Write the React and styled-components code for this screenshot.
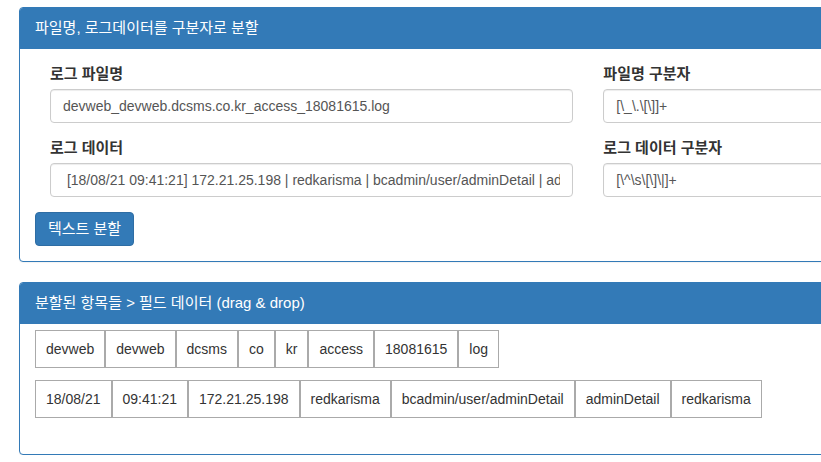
import styled, { createGlobalStyle } from "styled-components";

const GlobalStyle = createGlobalStyle`
  html, body {
    margin: 0;
    padding: 0;
    overflow: hidden;
    background: #fff;
  }
  body {
    font-family: "Liberation Sans", "Noto Sans CJK KR", sans-serif;
    font-size: 14px;
    line-height: 20px;
    color: #333;
  }
  * {
    box-sizing: border-box;
  }
`

const PageStyled = styled.div`
  padding: 7px 0 0 19px;
  display: flex;
  flex-direction: column;
  gap: 20px;
`
const PanelStyled = styled.div`
  width: 862px;
  border: 1px solid #337ab7;
  border-radius: 4px;
  background: #fff;
  box-shadow: 0 1px 1px rgba(0, 0, 0, 0.05);
`
const HeadingStyled = styled.div`
  background: #337ab7;
  color: #fff;
  padding: 10px 15px;
  border-bottom: 1px solid #337ab7;
  border-radius: 3px 3px 0 0;
  font-size: 15px;
  line-height: 20px;
`
const BodyStyled = styled.div`
  padding: ${(p) => p.$pad || "15px"};
`
const FormRowStyled = styled.div`
  display: grid;
  grid-template-columns: 2fr 1fr;
`
const ColStyled = styled.div`
  padding: 0 15px;
  display: flex;
  flex-direction: column;
`
const GroupStyled = styled.div`
  margin-bottom: 15px;
`
const LabelStyled = styled.label`
  display: block;
  font-size: 15px;
  font-weight: 700;
  margin-bottom: 5px;
  line-height: 20px;
`
const InputStyled = styled.input`
  display: block;
  width: 100%;
  height: 34px;
  padding: 6px 12px;
  font-family: inherit;
  font-size: 14px;
  line-height: 20px;
  color: #555;
  background: #fff;
  border: 1px solid #ccc;
  border-radius: 4px;
  box-shadow: inset 0 1px 1px rgba(0, 0, 0, 0.075);
  outline: none;
`
const ButtonStyled = styled.button`
  display: inline-block;
  padding: 6px 12px;
  font-family: inherit;
  font-size: 15px;
  line-height: 20px;
  color: #fff;
  background: #337ab7;
  border: 1px solid #2e6da4;
  border-radius: 4px;
  cursor: pointer;
`
const TileRowStyled = styled.div`
  display: flex;
  flex-wrap: wrap;
  margin-bottom: 12px;
  &:last-child {
    margin-bottom: 0;
  }
`
const TileStyled = styled.div`
  border: 1px solid #aaa;
  padding: 8px 10px;
  font-size: 14px;
  line-height: 20px;
  color: #333;
  background: #fff;
  cursor: move;
`

const fileTokens = ["devweb", "devweb", "dcsms", "co", "kr", "access", "18081615", "log"];
const dataTokens = ["18/08/21", "09:41:21", "172.21.25.198", "redkarisma", "bcadmin/user/adminDetail", "adminDetail", "redkarisma"];

const Field = ({ label, value }) => (
    <GroupStyled>
        <LabelStyled>{label}</LabelStyled>
        <InputStyled type="text" defaultValue={value} readOnly />
    </GroupStyled>
)

export default function App() {
    return (
        <>
            <GlobalStyle />
            <PageStyled>
                <PanelStyled>
                    <HeadingStyled>파일명, 로그데이터를 구분자로 분할</HeadingStyled>
                    <BodyStyled>
                        <FormRowStyled>
                            <ColStyled>
                                <Field label="로그 파일명" value="devweb_devweb.dcsms.co.kr_access_18081615.log" />
                                <Field label="로그 데이터" value=" [18/08/21 09:41:21] 172.21.25.198 | redkarisma | bcadmin/user/adminDetail | adminDetail | redkarisma" />
                            </ColStyled>
                            <ColStyled>
                                <Field label="파일명 구분자" value="[\_\.\[\]]+" />
                                <Field label="로그 데이터 구분자" value="[\^\s\[\]\|]+" />
                            </ColStyled>
                        </FormRowStyled>
                        <ButtonStyled type="button">텍스트 분할</ButtonStyled>
                    </BodyStyled>
                </PanelStyled>
                <PanelStyled>
                    <HeadingStyled>분할된 항목들 &gt; 필드 데이터 (drag &amp; drop)</HeadingStyled>
                    <BodyStyled $pad="6px 15px 36px">
                        <TileRowStyled>
                            {fileTokens.map((t, i) => <TileStyled key={i}>{t}</TileStyled>)}
                        </TileRowStyled>
                        <TileRowStyled>
                            {dataTokens.map((t, i) => <TileStyled key={i}>{t}</TileStyled>)}
                        </TileRowStyled>
                    </BodyStyled>
                </PanelStyled>
            </PageStyled>
        </>
    )
}
